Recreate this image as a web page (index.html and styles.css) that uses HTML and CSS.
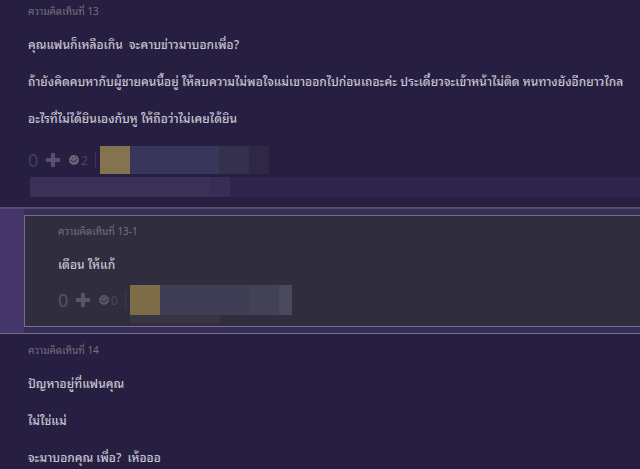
FILE: index.html
```html
<!DOCTYPE html>
<html lang="th">
<head>
    <meta charset="UTF-8">
    <meta name="viewport" content="width=device-width, initial-scale=1.0">
    <title>ความคิดเห็น</title>
    <link rel="stylesheet" href="styles.css">
</head>
<body>
    <div class="comment first">
        <h2 class="comment-no">ความคิดเห็นที่ 13</h2>
        <div class="message">
            <p>คุณแฟนก็เหลือเกิน&nbsp; จะคาบข่าวมาบอกเพื่อ?</p>
            <p>ถ้ายังคิดคบหากับผู้ชายคนนี้อยู่ ให้ลบความไม่พอใจแม่เขาออกไปก่อนเถอะค่ะ ประเดี๋ยวจะเข้าหน้าไม่ติด หนทางยังอีกยาวไกล</p>
            <p>อะไรที่ไม่ได้ยินเองกับหู ให้ถือว่าไม่เคยได้ยิน</p>
        </div>
        <div class="actions">
            <span class="score">0</span>
            <button type="button" class="vote" aria-label="โหวต">
                <svg width="14" height="14" viewBox="0 0 14 14"><path d="M5 0h4v5h5v4H9v5H5V9H0V5h5z" fill="currentColor"/></svg>
            </button>
            <button type="button" class="emotion">
                <svg width="10" height="10" viewBox="0 0 10 10"><circle cx="5" cy="5" r="5" fill="currentColor"/><path d="M2 5q3 4 6-1M3 3h1M6 2h1" class="face"/></svg>
                <span>2</span>
            </button>
            <span class="divider"></span>
            <div class="user">
                <span class="avatar"></span>
                <span class="name"></span>
                <span class="name-end"></span>
                <span class="name-fade"></span>
            </div>
        </div>
        <div class="reply-bar"><span class="reply-label"></span><span class="reply-more"></span></div>
    </div>

    <div class="replies">
        <div class="comment reply">
            <h2 class="comment-no">ความคิดเห็นที่ 13-1</h2>
            <div class="message">
                <p>เตือน ให้แก้</p>
            </div>
            <div class="actions">
                <span class="score">0</span>
                <button type="button" class="vote" aria-label="โหวต">
                    <svg width="14" height="14" viewBox="0 0 14 14"><path d="M5 0h4v5h5v4H9v5H5V9H0V5h5z" fill="currentColor"/></svg>
                </button>
                <button type="button" class="emotion">
                    <svg width="10" height="10" viewBox="0 0 10 10"><circle cx="5" cy="5" r="5" fill="currentColor"/><path d="M2 5q3 4 6-1M3 3h1M6 2h1" class="face"/></svg>
                    <span>0</span>
                </button>
                <span class="divider"></span>
                <div class="user">
                    <span class="avatar"></span>
                    <span class="name"></span>
                    <span class="name-end"></span>
                    <span class="name-fade"></span>
                </div>
            </div>
            <div class="user-shadow"></div>
        </div>
    </div>

    <div class="comment last">
        <h2 class="comment-no">ความคิดเห็นที่ 14</h2>
        <div class="message">
            <p>ปัญหาอยู่ที่แฟนคุณ</p>
            <p>ไม่ใช่แม่</p>
            <p>จะมาบอกคุณ เพื่อ?&nbsp; เห้อออ</p>
        </div>
    </div>
</body>
</html>
```

FILE: styles.css
```css
* {
    box-sizing: border-box;
}
body {
    margin: 0;
    background-color: #261f41;
    color: #c8c5d2;
    font-family: "Noto Sans", "Noto Sans Thai Looped", "Loma", "Waree", "Noto Sans Thai", sans-serif;
    font-size: 12px;
    font-weight: 500;
    overflow-x: hidden;
}
.comment {
    background-color: #261f41;
    padding-left: 28px;
}
.first {
    padding-bottom: 10px;
    border-bottom: 2px solid #574b70;
}
.comment-no {
    margin: 0;
    padding-top: 2px;
    font-size: 10px;
    font-weight: normal;
    line-height: 18px;
    color: #777080;
}
.message {
    padding-top: 16px;
}
.message p {
    margin: 0 0 19px;
    line-height: 18px;
    white-space: nowrap;
}
.message p:last-child {
    margin-bottom: 18px;
}
.actions {
    display: flex;
    align-items: center;
    height: 28px;
    color: #57506a;
}
.score {
    width: 18px;
    font-size: 18px;
    font-weight: normal;
    color: #453c70;
}
.vote,
.emotion {
    display: flex;
    align-items: center;
    padding: 0;
    border: 0;
    background: none;
    color: inherit;
    font-family: inherit;
    font-size: 12px;
    cursor: pointer;
}
.vote {
    width: 23px;
}
.emotion {
    gap: 2px;
    width: 26px;
}
.emotion svg {
    color: #6b6478;
}
.emotion span {
    color: #4d465f;
}
.face {
    fill: none;
    stroke: #2a2440;
}
.divider {
    width: 1px;
    height: 16px;
    margin-right: 4px;
    background-color: #403852;
}
.user {
    display: flex;
    height: 28px;
}
.avatar {
    width: 30px;
    background-color: #84734e;
}
.name {
    width: 89px;
    background-color: #38375b;
}
.name-end {
    width: 30px;
    background-color: #35304e;
}
.name-fade {
    width: 20px;
    background-color: #302843;
}
.reply-bar {
    display: flex;
    height: 20px;
    margin: 3px 0 0 2px;
    background-color: #2e244e;
}
.reply-label {
    width: 180px;
    background-color: #3b3158;
}
.reply-more {
    width: 20px;
    background-color: #382d56;
}
.replies {
    padding: 6px 0 6px 24px;
    background: linear-gradient(to right, #44356a 24px, #382d57 24px);
}
.reply {
    background-color: #302d3e;
    padding: 4px 0 3px 33px;
    border: 1px solid #75708a;
    border-right: 0;
}
.reply .score,
.reply .actions,
.reply .emotion svg {
    color: #5a5562;
}
.reply .message p {
    margin-bottom: 11px;
}
.reply .actions,
.reply .user {
    height: 30px;
}
.reply .avatar {
    background-color: #7c6c48;
}
.reply .name {
    background-color: #3e3d54;
}
.reply .name-end {
    background-color: #434156;
}
.reply .name-fade {
    width: 13px;
    background-color: #4a485b;
}
.user-shadow {
    width: 90px;
    height: 8px;
    margin-left: 72px;
    background-color: #383445;
}
.last {
    border-top: 1px solid #75708a;
    padding-top: 5px;
}
.last .message p:last-child {
    margin-bottom: 0;
}
```
